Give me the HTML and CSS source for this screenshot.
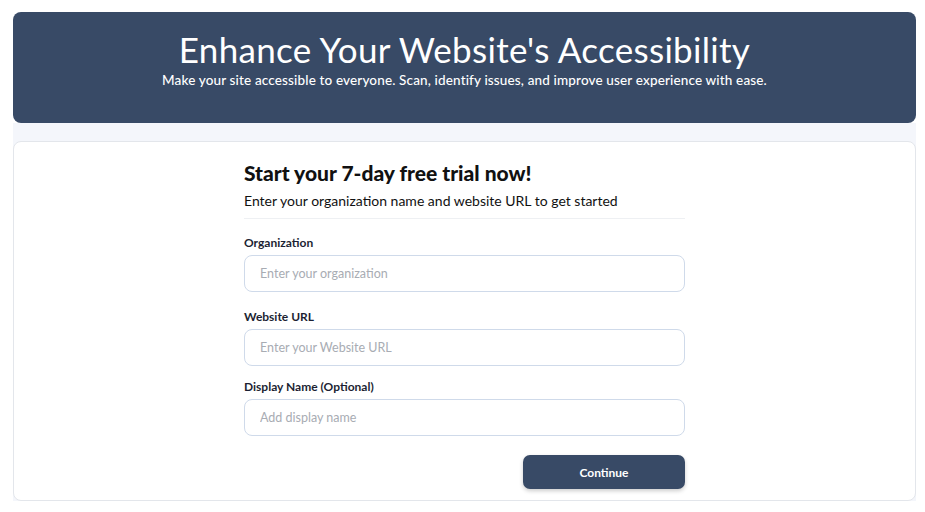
FILE: index.html
```html
<!DOCTYPE html>
<html lang="en">
<head>
    <meta charset="UTF-8">
    <title>Website Accessibility Trial</title>
    <link rel="stylesheet" href="styles.css">
</head>
<body>
    <header class="hero">
        <h1>Enhance Your Website's Accessibility</h1>
        <p>Make your site accessible to everyone. Scan, identify issues, and improve user experience with ease.</p>
    </header>

    <main class="panel">
        <div class="card">
            <form class="trial-form" id="trialForm">
                <h2>Start your 7-day free trial now!</h2>
                <p class="lead">Enter your organization name and website URL to get started</p>

                <label for="org">Organization</label>
                <input type="text" id="org" name="org" placeholder="Enter your organization">

                <label for="url">Website URL</label>
                <input type="text" id="url" name="url" placeholder="Enter your Website URL">

                <label for="display" class="tight">Display Name (Optional)</label>
                <input type="text" id="display" name="display" placeholder="Add display name">

                <div class="actions">
                    <button type="submit">Continue</button>
                </div>
            </form>
        </div>
    </main>
</body>
</html>
```

FILE: styles.css
```css
body {
    margin: 0;
    padding: 12px 9px 0 13px;
    font-family: Lato, "Noto Sans", sans-serif;
    background: #fff;
    color: #111;
}
.hero {
    background: #384a66;
    border-radius: 8px;
    color: #fff;
    text-align: center;
    height: 111px;
    box-sizing: border-box;
    padding-top: 26px;
}
.hero h1 {
    margin: 0;
    font-size: 35px;
    font-weight: 400;
    letter-spacing: 0.3px;
    line-height: 22px;
}
.hero p {
    margin: 12px 0 0;
    font-size: 13.5px;
    font-weight: 500;
    letter-spacing: 0.15px;
}
.panel {
    background: #f4f6fb;
    padding-top: 18px;
}
.card {
    background: #fff;
    border: 1px solid #e3e6eb;
    border-radius: 8px;
    height: 360px;
    box-sizing: border-box;
    display: flex;
    justify-content: center;
}
.trial-form {
    width: 441px;
    padding-top: 18px;
}
.trial-form h2 {
    margin: 0;
    font-size: 21px;
    font-weight: 900;
    line-height: 26px;
}
.lead {
    margin: 6px 0 0;
    font-size: 14px;
    line-height: 18px;
    padding-bottom: 8px;
    border-bottom: 1px solid #eef0f3;
}
label {
    display: block;
    font-size: 12px;
    font-weight: 700;
    color: #1c1f33;
    margin-top: 17px;
    line-height: 16px;
}
label[for="org"] {
    margin-top: 16px;
}
label.tight {
    margin-top: 13px;
}
input {
    display: block;
    width: 100%;
    box-sizing: border-box;
    height: 37px;
    margin-top: 4px;
    padding: 0 15px;
    border: 1.5px solid #cfdaea;
    border-radius: 8px;
    font-family: inherit;
    font-size: 12.5px;
    color: #333;
}
input::placeholder {
    color: #a8acb3;
}
.actions {
    display: flex;
    justify-content: flex-end;
    margin-top: 19px;
}
button {
    width: 162px;
    height: 34px;
    background: #384a66;
    color: #fff;
    border: none;
    border-radius: 7px;
    font-family: inherit;
    font-size: 12px;
    font-weight: 700;
    box-shadow: 0 2px 4px rgba(0,0,0,0.2);
}
```
